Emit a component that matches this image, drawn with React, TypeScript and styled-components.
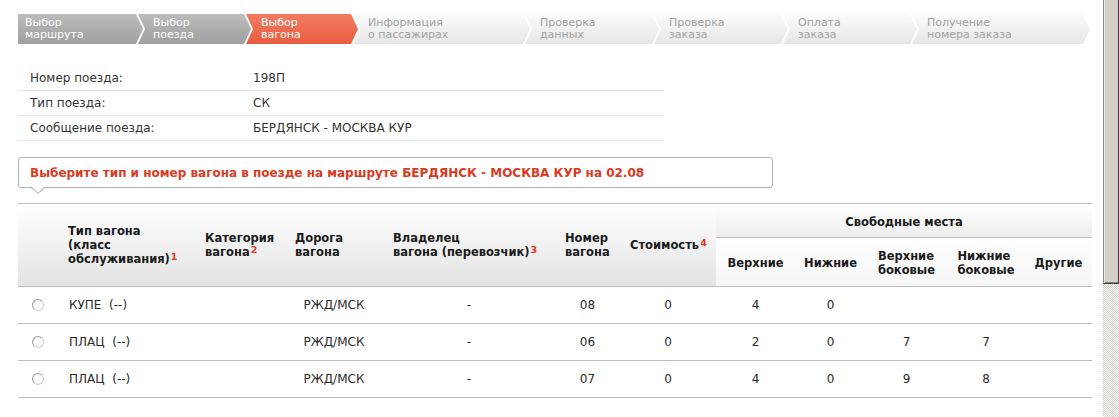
import React from 'react'
import styled, { createGlobalStyle } from 'styled-components'

const GlobalStyle = createGlobalStyle`
  html, body {
    margin: 0;
    padding: 0;
    background: #fff;
  }
  body {
    font-family: "DejaVu Sans", Verdana, sans-serif;
    color: #333;
  }
`

const Screen = styled.div`
  display: flex;
  width: 1119px;
  height: 417px;
  overflow: hidden;
`

const Page = styled.main`
  flex: 1;
  min-width: 0;
  padding: 14px 11px 0 18px;
`

// old-style window scrollbar on the right edge
const Scrollbar = styled.div`
  flex: 0 0 16px;
  display: flex;
  flex-direction: column;
  background: repeating-conic-gradient(#d4d0c8 0 25%, #ffffff 0 50%) 0 0 / 2px 2px;
`

const Thumb = styled.div`
  height: 284px;
  box-sizing: border-box;
  background: #d4d0c8;
  border-left: 1px solid #8c8a85;
  border-bottom: 1px solid #404040;
  box-shadow: inset -1px 0 #404040, inset 1px 0 #ece9e2, inset 0 -1px #808080;
`

/* ---------- steps ---------- */

type StepState = 'done' | 'active' | 'todo'

const Steps = styled.ol`
  display: flex;
  list-style: none;
  margin: 0;
  padding: 0;
  height: 30px;
`

const stepBg: Record<StepState, string> = {
  done: 'linear-gradient(to bottom, #bcbcbc, #9f9f9f)',
  active: 'linear-gradient(to bottom, #f27c63, #ea5c40)',
  todo: 'linear-gradient(to bottom, #fbfbfb, #e6e6e6)',
}

const Step = styled.li<{ $w: number; $state: StepState; $first?: boolean }>`
  flex: 0 0 ${p => p.$w}px;
  box-sizing: border-box;
  margin-left: ${p => (p.$first ? 0 : -5)}px;
  padding-left: ${p => (p.$first ? 7 : 15)}px;
  display: flex;
  align-items: center;
  background: ${p => stepBg[p.$state]};
  color: ${p => (p.$state === 'todo' ? '#a3a3a3' : '#fff')};
  font-size: 11px;
  line-height: 12px;
  clip-path: ${p =>
    p.$first
      ? 'polygon(0 0, calc(100% - 7px) 0, 100% 50%, calc(100% - 7px) 100%, 0 100%)'
      : 'polygon(0 0, calc(100% - 7px) 0, 100% 50%, calc(100% - 7px) 100%, 0 100%, 7px 50%)'};
`

const steps: { label: [string, string]; w: number; state: StepState }[] = [
  { label: ['Выбор', 'маршрута'], w: 125, state: 'done' },
  { label: ['Выбор', 'поезда'], w: 113, state: 'done' },
  { label: ['Выбор', 'вагона'], w: 112, state: 'active' },
  { label: ['Информация', 'о пассажирах'], w: 177, state: 'todo' },
  { label: ['Проверка', 'данных'], w: 134, state: 'todo' },
  { label: ['Проверка', 'заказа'], w: 134, state: 'todo' },
  { label: ['Оплата', 'заказа'], w: 134, state: 'todo' },
  { label: ['Получение', 'номера заказа'], w: 178, state: 'todo' },
]

/* ---------- train info ---------- */

const InfoList = styled.div`
  width: 646px;
  margin-top: 22px;
`

const InfoRow = styled.div`
  display: grid;
  grid-template-columns: 223px 1fr;
  height: 25px;
  box-sizing: border-box;
  align-items: center;
  padding-left: 12px;
  border-bottom: 1px solid #e3e3e3;
  font-size: 12px;
  color: #333;
`

/* ---------- notice ---------- */

const Notice = styled.div`
  position: relative;
  width: 755px;
  height: 31px;
  box-sizing: border-box;
  margin-top: 16px;
  padding-left: 11px;
  display: flex;
  align-items: center;
  border: 1px solid #b2b2b2;
  border-radius: 3px;
  color: #dc3a1f;
  font-size: 12px;
  font-weight: bold;

  &::before,
  &::after {
    content: '';
    position: absolute;
    top: 100%;
    width: 0;
    height: 0;
    border-style: solid;
    border-color: transparent;
  }
  &::before {
    left: 11px;
    border-width: 7px 8px 0 8px;
    border-top-color: #b2b2b2;
  }
  &::after {
    left: 12px;
    margin-top: -1px;
    border-width: 7px 7px 0 7px;
    border-top-color: #fff;
  }
`

/* ---------- wagons table ---------- */

const Table = styled.div`
  display: grid;
  grid-template-columns: 40px 137px 90px 98px 172px 65px 96px 79px 71px 81px 78px 67px;
  grid-template-rows: 34px 49px repeat(3, 37px);
  width: 1074px;
  margin-top: 15px;
  border-top: 1px solid #bdbdbd;
`

const HeadCell = styled.div`
  grid-row: span 2;
  box-sizing: border-box;
  padding-left: 10px;
  display: flex;
  align-items: center;
  border-bottom: 1px solid #bdbdbd;
  background: linear-gradient(to bottom, #ffffff, #e3e3e3);
  font-size: 11.5px;
  line-height: 14px;
  font-weight: bold;
  color: #1a1a1a;
`

const GroupCell = styled.div`
  grid-column: span 5;
  box-sizing: border-box;
  display: flex;
  align-items: center;
  justify-content: center;
  padding-top: 2px;
  border-bottom: 1px solid #bdbdbd;
  background: linear-gradient(to bottom, #ffffff, #ededed);
  font-size: 11.5px;
  font-weight: bold;
  color: #1a1a1a;
`

const SubCell = styled.div`
  box-sizing: border-box;
  display: flex;
  align-items: center;
  justify-content: center;
  padding-top: 2px;
  border-bottom: 1px solid #bdbdbd;
  background: linear-gradient(to bottom, #ffffff, #f6f6f6);
  font-size: 11.5px;
  line-height: 14px;
  font-weight: bold;
  color: #1a1a1a;
`

const Cell = styled.div<{ $left?: boolean }>`
  box-sizing: border-box;
  display: flex;
  align-items: center;
  justify-content: ${p => (p.$left ? 'flex-start' : 'center')};
  padding-left: ${p => (p.$left ? 11 : 0)}px;
  border-bottom: 1px solid #bdbdbd;
  font-size: 12px;
  color: #2a2a2a;
  white-space: pre;
`

const Sup = styled.sup`
  color: #e5331c;
  font-size: 9.5px;
  font-weight: bold;
  line-height: 0;
  vertical-align: 3px;
  margin-left: 1px;
`

const Radio = styled.span`
  width: 10px;
  height: 10px;
  border-radius: 50%;
  border: 1px solid #9c9c9c;
  border-right-color: #cfcfcf;
  border-bottom-color: #cfcfcf;
  background: radial-gradient(circle at 60% 60%, #ffffff 40%, #ededed 100%);
`

const wagons = [
  { type: 'КУПЕ\u00a0 (--)', road: 'РЖД/МСК', owner: '-', num: '08', price: '0', seats: ['4', '0', '', '', ''] },
  { type: 'ПЛАЦ\u00a0 (--)', road: 'РЖД/МСК', owner: '-', num: '06', price: '0', seats: ['2', '0', '7', '7', ''] },
  { type: 'ПЛАЦ\u00a0 (--)', road: 'РЖД/МСК', owner: '-', num: '07', price: '0', seats: ['4', '0', '9', '8', ''] },
]

export default function App() {
  return (
    <>
      <GlobalStyle />
      <Screen>
        <Page>
          <Steps>
            {steps.map((s, i) => (
              <Step key={i} $w={s.w} $state={s.state} $first={i === 0}>
                <span>
                  {s.label[0]}
                  <br />
                  {s.label[1]}
                </span>
              </Step>
            ))}
          </Steps>

          <InfoList>
            <InfoRow>
              <span>Номер поезда:</span>
              <span>198П</span>
            </InfoRow>
            <InfoRow>
              <span>Тип поезда:</span>
              <span>СК</span>
            </InfoRow>
            <InfoRow>
              <span>Сообщение поезда:</span>
              <span>БЕРДЯНСК - МОСКВА КУР</span>
            </InfoRow>
          </InfoList>

          <Notice>Выберите тип и номер вагона в поезде на маршруте БЕРДЯНСК - МОСКВА КУР на 02.08</Notice>

          <Table>
            <HeadCell />
            <HeadCell>
              <span>
                Тип вагона
                <br />
                (класс
                <br />
                обслуживания)<Sup>1</Sup>
              </span>
            </HeadCell>
            <HeadCell>
              <span>
                Категория
                <br />
                вагона<Sup>2</Sup>
              </span>
            </HeadCell>
            <HeadCell>
              <span>
                Дорога
                <br />
                вагона
              </span>
            </HeadCell>
            <HeadCell>
              <span>
                Владелец
                <br />
                вагона (перевозчик)<Sup>3</Sup>
              </span>
            </HeadCell>
            <HeadCell>
              <span>
                Номер
                <br />
                вагона
              </span>
            </HeadCell>
            <HeadCell>
              <span>
                Стоимость<Sup>4</Sup>
              </span>
            </HeadCell>
            <GroupCell>Свободные места</GroupCell>
            <SubCell>Верхние</SubCell>
            <SubCell>Нижние</SubCell>
            <SubCell>
              <span>
                Верхние
                <br />
                боковые
              </span>
            </SubCell>
            <SubCell>
              <span>
                Нижние
                <br />
                боковые
              </span>
            </SubCell>
            <SubCell>Другие</SubCell>

            {wagons.map((w, i) => (
              <React.Fragment key={i}>
                <Cell>
                  <Radio />
                </Cell>
                <Cell $left>{w.type}</Cell>
                <Cell />
                <Cell>{w.road}</Cell>
                <Cell>{w.owner}</Cell>
                <Cell>{w.num}</Cell>
                <Cell>{w.price}</Cell>
                {w.seats.map((s, j) => (
                  <Cell key={j}>{s}</Cell>
                ))}
              </React.Fragment>
            ))}
          </Table>
        </Page>
        <Scrollbar>
          <Thumb />
        </Scrollbar>
      </Screen>
    </>
  )
}
